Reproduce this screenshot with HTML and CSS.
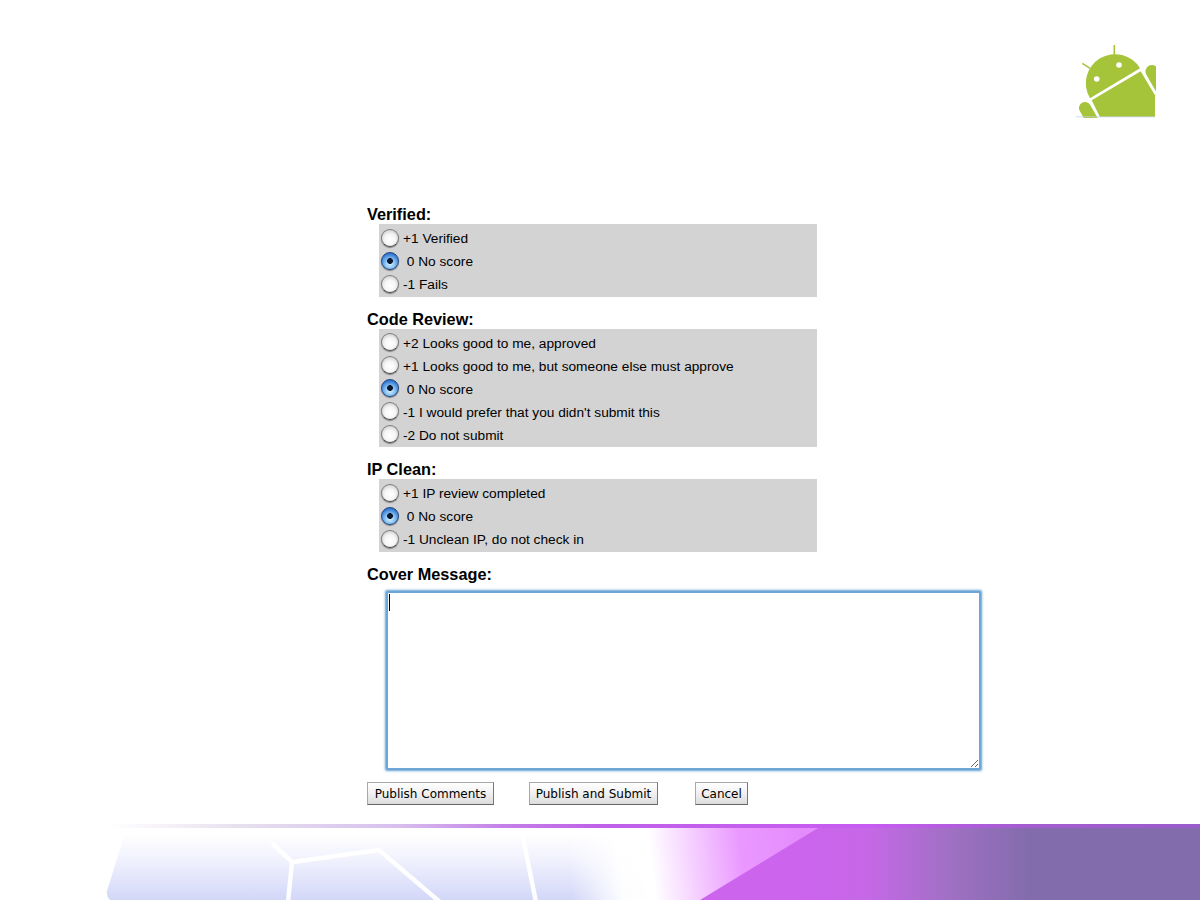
FILE: index.html
```html
<!DOCTYPE html>
<html lang="en">
<head>
<meta charset="utf-8">
<title>Publish Comments</title>
<link rel="stylesheet" href="styles.css">
</head>
<body>
<div class="slide">
  <header class="top">
    <svg class="logo" width="80" height="74" viewBox="0 0 80 74" aria-hidden="true">
      <g fill="#a5c43a">
        <path d="M14 54.3A29 29 0 0 1 64 24.3Z"/>
        <path d="M15.7 56.3L64.7 27.3L79 51.3V73H24Z"/>
      </g>
      <g stroke="#a5c43a" fill="none">
        <path d="M76 27.5L101 71" stroke-width="13" stroke-linecap="round"/>
        <path d="M9 64L25 92" stroke-width="12" stroke-linecap="round"/>
        <path d="M38.3 1V12" stroke-width="1.6"/>
        <path d="M6.3 19.3L15.7 25.3" stroke-width="1.6"/>
      </g>
      <circle cx="20.7" cy="35" r="2.8" fill="#fff"/>
      <circle cx="43" cy="21" r="2.8" fill="#fff"/>
      <path d="M0 72.8H79" stroke="#c8d0e8" stroke-width="0.8"/>
    </svg>
  </header>
  <main class="form">
    <section class="group">
      <h2 class="label">Verified:</h2>
      <div class="panel">
        <label class="row"><input type="radio" name="verified" class="radio"><span>+1 Verified</span></label>
        <label class="row"><input type="radio" name="verified" class="radio" checked><span>&nbsp;0 No score</span></label>
        <label class="row"><input type="radio" name="verified" class="radio"><span>-1 Fails</span></label>
      </div>
    </section>
    <section class="group">
      <h2 class="label">Code Review:</h2>
      <div class="panel">
        <label class="row"><input type="radio" name="review" class="radio"><span>+2 Looks good to me, approved</span></label>
        <label class="row"><input type="radio" name="review" class="radio"><span>+1 Looks good to me, but someone else must approve</span></label>
        <label class="row"><input type="radio" name="review" class="radio" checked><span>&nbsp;0 No score</span></label>
        <label class="row"><input type="radio" name="review" class="radio"><span>-1 I would prefer that you didn't submit this</span></label>
        <label class="row"><input type="radio" name="review" class="radio"><span>-2 Do not submit</span></label>
      </div>
    </section>
    <section class="group">
      <h2 class="label">IP Clean:</h2>
      <div class="panel">
        <label class="row"><input type="radio" name="ip" class="radio"><span>+1 IP review completed</span></label>
        <label class="row"><input type="radio" name="ip" class="radio" checked><span>&nbsp;0 No score</span></label>
        <label class="row"><input type="radio" name="ip" class="radio"><span>-1 Unclean IP, do not check in</span></label>
      </div>
    </section>
    <section class="group">
      <h2 class="label">Cover Message:</h2>
      <div class="message">
        <textarea class="input" aria-label="Cover Message"></textarea>
        <span class="caret"></span>
      </div>
    </section>
    <div class="actions">
      <button type="button" class="btn btn-comments">Publish Comments</button>
      <button type="button" class="btn btn-submit">Publish and Submit</button>
      <button type="button" class="btn btn-cancel">Cancel</button>
    </div>
  </main>
  <footer class="bottom">
    <svg class="band" width="1200" height="76" viewBox="0 0 1200 76" aria-hidden="true">
      <defs>
        <linearGradient id="topband" x1="0" x2="1" y1="0" y2="0">
          <stop offset="0.09" stop-color="#e8e0f0" stop-opacity="0"/>
          <stop offset="0.2" stop-color="#e6e0ee"/>
          <stop offset="0.33" stop-color="#d8c0ee"/>
          <stop offset="0.42" stop-color="#c480e8"/>
          <stop offset="0.5" stop-color="#bf60e8"/>
          <stop offset="0.72" stop-color="#c85cf2"/>
          <stop offset="0.85" stop-color="#a45cd0"/>
          <stop offset="1" stop-color="#9a5ccc"/>
        </linearGradient>
        <linearGradient id="pale" x1="0" x2="0" y1="0" y2="1">
          <stop offset="0.08" stop-color="#ffffff"/>
          <stop offset="0.45" stop-color="#f0f1fd"/>
          <stop offset="1" stop-color="#d2d7f8"/>
        </linearGradient>
        <linearGradient id="pink" gradientUnits="userSpaceOnUse" x1="570" x2="800" y1="60" y2="35">
          <stop offset="0" stop-color="#fff" stop-opacity="0"/>
          <stop offset="0.22" stop-color="#fff" stop-opacity="0.95"/>
          <stop offset="0.36" stop-color="#fff"/>
          <stop offset="0.75" stop-color="#ea98ff"/>
          <stop offset="1" stop-color="#e58cfd"/>
        </linearGradient>
        <linearGradient id="purple" gradientUnits="userSpaceOnUse" x1="800" x2="1030" y1="0" y2="0">
          <stop offset="0" stop-color="#cc64ee"/>
          <stop offset="0.3" stop-color="#c568e6"/>
          <stop offset="0.65" stop-color="#a070c4"/>
          <stop offset="1" stop-color="#826cac"/>
        </linearGradient>
      </defs>
      <path d="M127 8Q125 8 124 12L107 67Q106 72 110 76H700L822 4H127Z" fill="url(#pale)"/>
      <g stroke="#fff" stroke-width="4.5" fill="none" stroke-opacity="0.95">
        <path d="M272 19L292 38L379 26L440 78"/>
        <path d="M292 38L288 78"/>
        <path d="M522 9L536 78"/>
      </g>
      <path d="M570 4H822L700 76H570Z" fill="url(#pink)"/>
      <path d="M818 4H1200V76H700Z" fill="url(#purple)"/>
      <rect x="0" y="0" width="1200" height="4" fill="url(#topband)"/>
    </svg>
  </footer>
</div>
</body>
</html>
```
FILE: styles.css
```css
* { box-sizing: border-box; }
html, body { margin: 0; padding: 0; background: #fff; }
.slide {
  width: 1200px;
  height: 900px;
  display: flex;
  flex-direction: column;
  overflow: hidden;
  font-family: "Liberation Sans", Arial, sans-serif;
  color: #000;
}
.top {
  display: flex;
  justify-content: flex-end;
  padding: 44px 44px 0 0;
}
.logo { display: block; }
.form {
  flex: 1;
  padding: 88px 0 0 367px;
}
.group { margin-bottom: 14px; }
.label {
  margin: 0;
  height: 18px;
  font-size: 16.3px;
  line-height: 17px;
  font-weight: bold;
}
.panel {
  width: 438px;
  margin-left: 12px;
  padding: 3px 0 0.5px 2px;
  background: #d3d3d3;
  font-size: 13.7px;
}
.row {
  display: flex;
  align-items: center;
  gap: 4px;
  height: 23px;
}
.radio {
  appearance: none;
  -webkit-appearance: none;
  flex: none;
  width: 18px;
  height: 18px;
  margin: 0 0 1.5px;
  border-radius: 50%;
  border: 1px solid #7c7c7c;
  border-bottom-color: #4a4a4a;
  background: radial-gradient(circle at 50% 60%, #ffffff 0, #f6f6f6 42%, #cfcfcf 82%, #a8a8a8 100%);
  box-shadow: 0 1px 1px rgba(0, 0, 0, 0.4);
}
.radio:checked {
  border-color: #1f4684;
  background:
    radial-gradient(circle at 50% 50%, #0b1730 0, #0b1730 2.6px, transparent 3.2px),
    radial-gradient(circle at 50% 68%, #d6effd 0, #8cc5f2 35%, #3b80d6 70%, #174c9c 100%);
}
.message {
  position: relative;
  width: 595px;
  height: 179px;
  margin: 7.5px 0 0 19px;
}
.input {
  display: block;
  width: 100%;
  height: 100%;
  margin: 0;
  padding: 0;
  background: #fff;
  border: 2px solid #6ea6d6;
  border-radius: 2px;
  box-shadow: 0 0 0 1px #8dbbe0, 0 0 2px 2px #c4ddf1;
  outline: none;
}
.caret {
  position: absolute;
  left: 3px;
  top: 3px;
  width: 1px;
  height: 17px;
  background: #000;
}
.actions {
  display: flex;
  margin-top: -2px;
  gap: 35px;
}
.btn {
  height: 23px;
  margin: 0;
  padding: 2px 0 0;
  font-family: "DejaVu Sans", sans-serif;
  font-size: 12px;
  line-height: 19px;
  color: #000;
  background: linear-gradient(#ffffff, #f2f2f2 45%, #dcdcdc);
  border: 1px solid #a8a8a8;
  border-right-color: #777;
  border-bottom-color: #666;
  border-radius: 0;
}
.btn-comments { width: 127px; }
.btn-submit { width: 129px; margin-right: 2px; }
.btn-cancel { width: 53px; }
.bottom {
  height: 76px;
  flex: none;
}
.band { display: block; }
```
